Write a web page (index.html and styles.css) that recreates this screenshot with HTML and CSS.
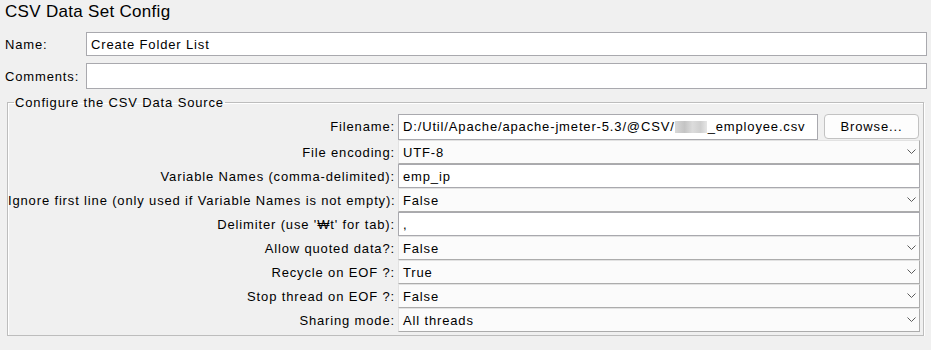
FILE: index.html
```html
<!DOCTYPE html>
<html lang="en">
<head>
  <meta charset="UTF-8">
  <title>CSV Data Set Config</title>
  <link rel="stylesheet" href="styles.css">
</head>
<body>
  <div class="panel">
    <h1 class="title">CSV Data Set Config</h1>

    <div class="line">
      <label>Name:</label>
      <div class="text-field">Create Folder List</div>
    </div>
    <div class="line comments">
      <label>Comments:</label>
      <div class="text-field"></div>
    </div>

    <fieldset class="source">
      <legend>Configure the CSV Data Source</legend>
      <div class="grid">
        <label>Filename:</label>
        <div class="file-row">
          <div class="text-field file">D:/Util/Apache/apache-jmeter-5.3/@CSV/<span class="redact"></span>_employee.csv</div>
          <button class="browse">Browse...</button>
        </div>

        <label>File encoding:</label>
        <div class="combo"><span>UTF-8</span><svg width="9" height="6" viewBox="0 0 9 6"><polyline points="0.5,0.5 4.5,4.5 8.5,0.5" fill="none" stroke="#5c5c5c" stroke-width="1"/></svg></div>

        <label>Variable Names (comma-delimited):</label>
        <div class="text-field">emp_ip</div>

        <label>Ignore first line (only used if Variable Names is not empty):</label>
        <div class="combo"><span>False</span><svg width="9" height="6" viewBox="0 0 9 6"><polyline points="0.5,0.5 4.5,4.5 8.5,0.5" fill="none" stroke="#5c5c5c" stroke-width="1"/></svg></div>

        <label>Delimiter (use '₩t' for tab):</label>
        <div class="text-field">,</div>

        <label>Allow quoted data?:</label>
        <div class="combo"><span>False</span><svg width="9" height="6" viewBox="0 0 9 6"><polyline points="0.5,0.5 4.5,4.5 8.5,0.5" fill="none" stroke="#5c5c5c" stroke-width="1"/></svg></div>

        <label>Recycle on EOF ?:</label>
        <div class="combo"><span>True</span><svg width="9" height="6" viewBox="0 0 9 6"><polyline points="0.5,0.5 4.5,4.5 8.5,0.5" fill="none" stroke="#5c5c5c" stroke-width="1"/></svg></div>

        <label>Stop thread on EOF ?:</label>
        <div class="combo"><span>False</span><svg width="9" height="6" viewBox="0 0 9 6"><polyline points="0.5,0.5 4.5,4.5 8.5,0.5" fill="none" stroke="#5c5c5c" stroke-width="1"/></svg></div>

        <label>Sharing mode:</label>
        <div class="combo"><span>All threads</span><svg width="9" height="6" viewBox="0 0 9 6"><polyline points="0.5,0.5 4.5,4.5 8.5,0.5" fill="none" stroke="#5c5c5c" stroke-width="1"/></svg></div>
      </div>
    </fieldset>
  </div>
</body>
</html>
```

FILE: styles.css
```css
* {
  margin: 0;
  padding: 0;
  box-sizing: border-box;
}

body {
  font-family: "Liberation Sans", Arial, sans-serif;
  font-size: 13px;
  letter-spacing: 0.85px;
  color: #000;
  background: #f0f0f0;
}

.panel {
  padding: 2px 4px 0 5px;
}

.title {
  font-size: 17px;
  font-weight: normal;
  letter-spacing: 0.3px;
  height: 30px;
  line-height: 20px;
}

.line {
  display: grid;
  grid-template-columns: 81px 1fr;
  align-items: center;
  height: 24px;
}

.line.comments {
  margin-top: 7px;
  height: 26px;
}

.line .text-field {
  height: 100%;
}

.text-field {
  background: #fff;
  border: 1px solid #a9a9ae;
  height: 24px;
  padding: 0 4px;
  display: flex;
  align-items: center;
  white-space: nowrap;
  overflow: hidden;
}

.source {
  margin: 6px 3px 0 2px;
  border: 1px solid #bdbdbd;
  box-shadow: inset 1px 1px 0 #fff, 1px 1px 0 #fff;
  padding: 3px 3px 3px 0;
}

.source legend {
  margin-left: 6px;
  padding: 0 1px;
  line-height: 15px;
}

.grid {
  display: grid;
  grid-template-columns: 387px 1fr;
  grid-template-rows: 27px;
  grid-auto-rows: 24px;
  column-gap: 3px;
  align-items: center;
}

.grid label {
  text-align: right;
  white-space: nowrap;
}

.file-row {
  display: flex;
  gap: 6px;
  align-items: center;
}

.text-field.file {
  width: 420px;
  height: 26px;
}

.redact {
  display: inline-block;
  width: 32px;
  height: 12px;
  margin-right: 1px;
  background: linear-gradient(90deg, #d8d8d8 0%, #c4c4c4 30%, #dcdcdc 55%, #cfcfcf 80%, #e6e6e6 100%);
}

.browse {
  width: 95px;
  height: 25px;
  font: inherit;
  letter-spacing: 0.85px;
  color: #000;
  background: #fdfdfd;
  border: 1px solid #c2c2c2;
  border-radius: 4px;
}

.combo {
  height: 24px;
  background: #fbfbfb;
  border: 1px solid #e2e2e2;
  border-right-color: #acacac;
  border-bottom-color: #acacac;
  padding: 0 3px 0 4px;
  display: flex;
  align-items: center;
  justify-content: space-between;
}
```
